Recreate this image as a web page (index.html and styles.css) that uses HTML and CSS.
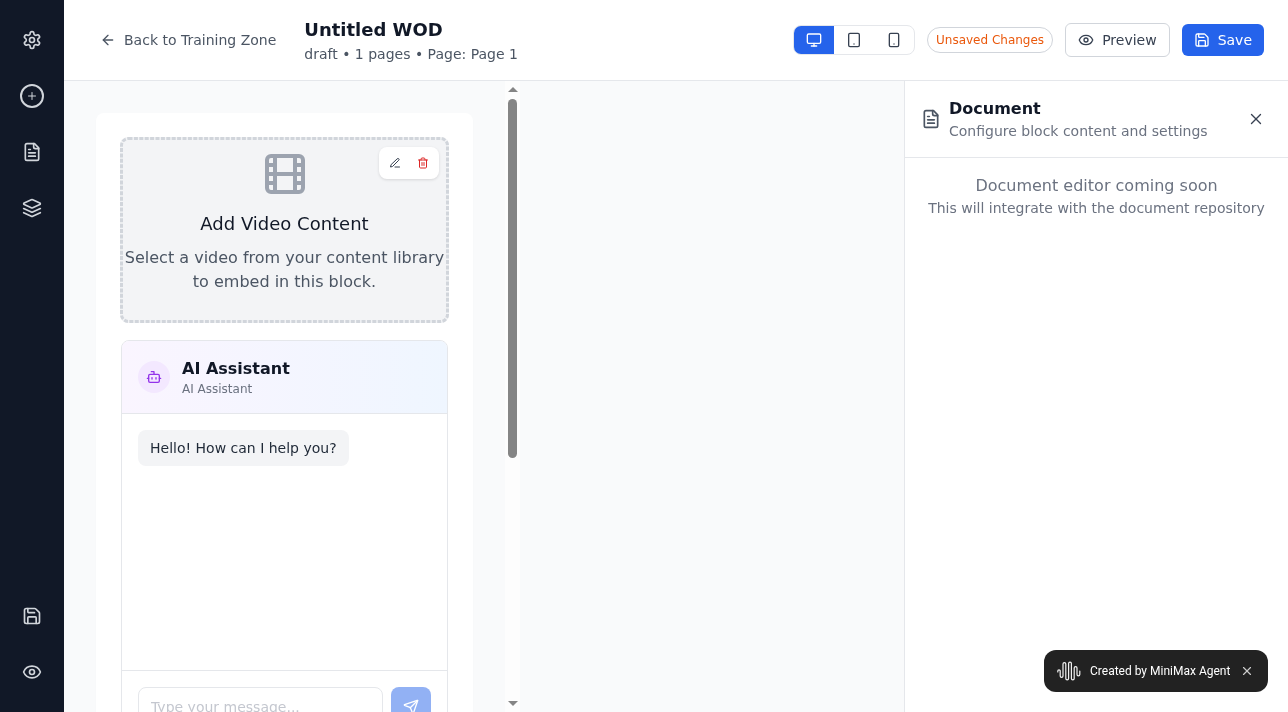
FILE: index.html
```html
<!DOCTYPE html>
<html>
	<head>
		<meta charset="utf-8" />
		<meta name="viewport" content="width=device-width, initial-scale=1">
		<title>Untitled WOD</title>
		<link rel="stylesheet" href="styles.css">
	</head>
	<body>
		<svg class="defs" width="0" height="0">
			<symbol id="i-settings" viewBox="0 0 24 24"><path d="M12.22 2h-.44a2 2 0 0 0-2 2v.18a2 2 0 0 1-1 1.73l-.43.25a2 2 0 0 1-2 0l-.15-.08a2 2 0 0 0-2.73.73l-.22.38a2 2 0 0 0 .73 2.73l.15.1a2 2 0 0 1 1 1.72v.51a2 2 0 0 1-1 1.74l-.15.09a2 2 0 0 0-.73 2.73l.22.38a2 2 0 0 0 2.73.73l.15-.08a2 2 0 0 1 2 0l.43.25a2 2 0 0 1 1 1.73V20a2 2 0 0 0 2 2h.44a2 2 0 0 0 2-2v-.18a2 2 0 0 1 1-1.73l.43-.25a2 2 0 0 1 2 0l.15.08a2 2 0 0 0 2.73-.73l.22-.39a2 2 0 0 0-.73-2.73l-.15-.08a2 2 0 0 1-1-1.74v-.5a2 2 0 0 1 1-1.74l.15-.09a2 2 0 0 0 .73-2.73l-.22-.38a2 2 0 0 0-2.73-.73l-.15.08a2 2 0 0 1-2 0l-.43-.25a2 2 0 0 1-1-1.73V4a2 2 0 0 0-2-2z"/><circle cx="12" cy="12" r="3"/></symbol>
			<symbol id="i-file" viewBox="0 0 24 24"><path d="M15 2H6a2 2 0 0 0-2 2v16a2 2 0 0 0 2 2h12a2 2 0 0 0 2-2V7Z"/><path d="M14 2v4a2 2 0 0 0 2 2h4"/><path d="M10 9H8"/><path d="M16 13H8"/><path d="M16 17H8"/></symbol>
			<symbol id="i-layers" viewBox="0 0 24 24"><path d="m12.83 2.18a2 2 0 0 0-1.66 0L2.6 6.08a1 1 0 0 0 0 1.83l8.58 3.91a2 2 0 0 0 1.66 0l8.58-3.9a1 1 0 0 0 0-1.83Z"/><path d="m22 17.65-9.17 4.16a2 2 0 0 1-1.66 0L2 17.65"/><path d="m22 12.65-9.17 4.16a2 2 0 0 1-1.66 0L2 12.65"/></symbol>
			<symbol id="i-save" viewBox="0 0 24 24"><path d="M15.2 3a2 2 0 0 1 1.4.6l3.8 3.8a2 2 0 0 1 .6 1.4V19a2 2 0 0 1-2 2H5a2 2 0 0 1-2-2V5a2 2 0 0 1 2-2z"/><path d="M17 21v-7a1 1 0 0 0-1-1H8a1 1 0 0 0-1 1v7"/><path d="M7 3v4a1 1 0 0 0 1 1h7"/></symbol>
			<symbol id="i-eye" viewBox="0 0 24 24"><path d="M2.062 12.348a1 1 0 0 1 0-.696 10.75 10.75 0 0 1 19.876 0 1 1 0 0 1 0 .696 10.75 10.75 0 0 1-19.876 0"/><circle cx="12" cy="12" r="3"/></symbol>
			<symbol id="i-x" viewBox="0 0 24 24"><path d="M18 6 6 18"/><path d="m6 6 12 12"/></symbol>
		</svg>

		<div class="app">
			<nav class="rail">
				<div class="rail-group">
					<a class="rail-btn"><svg class="ic ic-20"><use href="#i-settings"/></svg></a>
					<a class="rail-btn">
						<span class="add-ring"><svg class="ic ic-12" viewBox="0 0 24 24"><path d="M5 12h14"/><path d="M12 5v14"/></svg></span>
					</a>
					<a class="rail-btn"><svg class="ic ic-20"><use href="#i-file"/></svg></a>
					<a class="rail-btn"><svg class="ic ic-20"><use href="#i-layers"/></svg></a>
				</div>
				<div class="rail-group">
					<a class="rail-btn"><svg class="ic ic-20"><use href="#i-save"/></svg></a>
					<a class="rail-btn"><svg class="ic ic-20"><use href="#i-eye"/></svg></a>
				</div>
			</nav>

			<div class="main">
				<header class="topbar">
					<div class="topbar-left">
						<a class="back">
							<svg class="ic ic-16" viewBox="0 0 24 24"><path d="m12 19-7-7 7-7"/><path d="M19 12H5"/></svg>
							Back to Training Zone
						</a>
						<div class="page-info">
							<h1>Untitled WOD</h1>
							<p>draft • 1 pages • Page: Page 1</p>
						</div>
					</div>
					<div class="topbar-right">
						<div class="devices">
							<span class="device on"><svg class="ic ic-16" viewBox="0 0 24 24"><rect x="2" y="3" width="20" height="14" rx="2"/><path d="M8 21h8"/><path d="M12 17v4"/></svg></span>
							<span class="device"><svg class="ic ic-16" viewBox="0 0 24 24"><rect x="4" y="2" width="16" height="20" rx="2"/><path d="M12 18h.01"/></svg></span>
							<span class="device"><svg class="ic ic-16" viewBox="0 0 24 24"><rect x="5" y="2" width="14" height="20" rx="2"/><path d="M12 18h.01"/></svg></span>
						</div>
						<span class="unsaved">Unsaved Changes</span>
						<a class="btn btn-line"><svg class="ic ic-16"><use href="#i-eye"/></svg>Preview</a>
						<a class="btn btn-blue"><svg class="ic ic-16"><use href="#i-save"/></svg>Save</a>
					</div>
				</header>

				<div class="workspace">
					<div class="canvas">
						<div class="sheet">
							<section class="video-block">
								<svg class="dashes" width="329" height="186"><rect x="1.500" y="1.500" width="326" height="183" rx="7"/></svg>
								<div class="block-tools">
									<svg class="ic ic-12" viewBox="0 0 24 24"><path d="M12 20h9"/><path d="M16.5 3.5a2.12 2.12 0 0 1 3 3L7 19l-4 1 1-4Z"/></svg>
									<svg class="ic ic-12 red" viewBox="0 0 24 24"><path d="M3 6h18"/><path d="M19 6v14c0 1-1 2-2 2H7c-1 0-2-1-2-2V6"/><path d="M8 6V4c0-1 1-2 2-2h4c1 0 2 1 2 2v2"/><path d="M10 11v6"/><path d="M14 11v6"/></svg>
								</div>
								<svg class="ic film" viewBox="0 0 24 24"><rect x="3" y="3" width="18" height="18" rx="2"/><path d="M7 3v18"/><path d="M3 7.5h4"/><path d="M3 12h18"/><path d="M3 16.5h4"/><path d="M17 3v18"/><path d="M17 7.5h4"/><path d="M17 16.5h4"/></svg>
								<h3>Add Video Content</h3>
								<p>Select a video from your content library to embed in this block.</p>
							</section>

							<section class="chat">
								<div class="chat-head">
									<span class="bot"><svg class="ic ic-16" viewBox="0 0 24 24"><path d="M12 8V4H8"/><rect x="4" y="8" width="16" height="12" rx="2"/><path d="M2 14h2"/><path d="M20 14h2"/><path d="M15 13v2"/><path d="M9 13v2"/></svg></span>
									<div>
										<h4>AI Assistant</h4>
										<small>AI Assistant</small>
									</div>
								</div>
								<div class="chat-body">
									<div class="bubble">Hello! How can I help you?</div>
								</div>
								<div class="chat-foot">
									<input type="text" placeholder="Type your message..." />
									<span class="send"><svg class="ic ic-16" viewBox="0 0 24 24"><path d="M14.536 21.686a.5.5 0 0 0 .937-.024l6.5-19a.496.496 0 0 0-.635-.635l-19 6.5a.5.5 0 0 0-.024.937l7.93 3.18a2 2 0 0 1 1.112 1.11z"/><path d="m21.854 2.147-10.94 10.939"/></svg></span>
								</div>
							</section>
						</div>
					</div>

					<div class="scrollbar">
						<i class="arrow up"></i>
						<b class="thumb"></b>
						<i class="arrow down"></i>
					</div>

					<div class="spacer"></div>

					<aside class="panel">
						<div class="panel-head">
							<svg class="ic ic-20 doc"><use href="#i-file"/></svg>
							<div class="panel-title">
								<h2>Document</h2>
								<p>Configure block content and settings</p>
							</div>
							<svg class="ic close"><use href="#i-x"/></svg>
						</div>
						<div class="panel-body">
							<p class="soon">Document editor coming soon</p>
							<p class="soon-sub">This will integrate with the document repository</p>
						</div>
					</aside>
				</div>
			</div>
		</div>

		<div class="toast">
			<svg class="wave" viewBox="0 0 24 20"><path d="M.8 11V10a1.200 1.200 0 0 1 2.400 0v5a1.400 1.400 0 0 0 2.800 0V3a1.400 1.400 0 0 1 2.800 0v14.500a1.400 1.400 0 0 0 2.800 0V2.500a1.400 1.400 0 0 1 2.800 0v15a1.400 1.400 0 0 0 2.800 0V7a1.400 1.400 0 0 1 2.800 0v6.500a1.400 1.400 0 0 0 2.800 0V10"/></svg>
			<span>Created by MiniMax Agent</span>
			<svg class="ic toast-x"><use href="#i-x"/></svg>
		</div>
	</body>
</html>
```

FILE: styles.css
```css
*{
	box-sizing: border-box;
}
html,body{
	margin: 0;
	height: 100%;
	overflow: hidden;
}
body{
	font-family: "DejaVu Sans", sans-serif;
	font-size: 14px;
	color: #111827;
}
h1,h2,h3,h4,p{
	margin: 0;
}
.defs{
	position: absolute;
}
.ic{
	fill: none;
	stroke: currentColor;
	stroke-width: 2;
	stroke-linecap: round;
	stroke-linejoin: round;
	flex: none;
	display: block;
}
.ic-12{
	width: 12px;
	height: 12px;
}
.ic-16{
	width: 16px;
	height: 16px;
}
.ic-20{
	width: 20px;
	height: 20px;
}
.red{
	color: #dc2626;
}

.app{
	display: flex;
	height: 712px;
	will-change: transform;
}

/* left rail */
.rail{
	width: 64px;
	flex: none;
	background: #111827;
	color: #d1d5db;
	display: flex;
	flex-direction: column;
	justify-content: space-between;
	padding: 20px 0;
}
.rail-group{
	display: flex;
	flex-direction: column;
	gap: 16px;
}
.rail-btn{
	height: 40px;
	display: flex;
	align-items: center;
	justify-content: center;
}
.add-ring{
	width: 24px;
	height: 24px;
	border: 2px solid #d1d5db;
	border-radius: 50%;
	display: flex;
	align-items: center;
	justify-content: center;
}

.main{
	flex: 1;
	min-width: 0;
	display: flex;
	flex-direction: column;
}

/* top bar */
.topbar{
	height: 81px;
	flex: none;
	background: white;
	border-bottom: 1px solid #e5e7eb;
	padding: 0 24px;
	display: flex;
	align-items: center;
	justify-content: space-between;
}
.topbar-left{
	display: flex;
	align-items: center;
	gap: 16px;
}
.back{
	display: flex;
	align-items: center;
	gap: 8px;
	padding: 8px 12px;
	color: #4b5563;
}
.page-info h1{
	font-size: 18px;
	line-height: 28px;
	font-weight: 600;
}
.page-info p{
	line-height: 20px;
	color: #4b5563;
}
.topbar-right{
	display: flex;
	align-items: center;
	gap: 12px;
}
.devices{
	display: flex;
	border: 1px solid #e5e7eb;
	border-radius: 8px;
	overflow: hidden;
}
.device{
	width: 40px;
	height: 28px;
	display: flex;
	align-items: center;
	justify-content: center;
	color: #374151;
}
.device.on{
	background: #2563eb;
	color: white;
}
.unsaved{
	font-size: 12px;
	line-height: 16px;
	padding: 4px 8px;
	border: 1px solid #d1d5db;
	border-radius: 13px;
	color: #ea580c;
}
.btn{
	display: flex;
	align-items: center;
	gap: 8px;
	border-radius: 6px;
	line-height: 20px;
}
.btn-line{
	padding: 6px 12px;
	border: 1px solid #d1d5db;
	color: #374151;
}
.btn-blue{
	padding: 6px 12px;
	background: #2563eb;
	color: white;
}

/* canvas + side panel */
.workspace{
	flex: 1;
	min-height: 0;
	display: flex;
	background: #f9fafb;
}
.canvas{
	width: 441px;
	flex: none;
	padding: 32px 32px 0;
	overflow: hidden;
}
.sheet{
	background: white;
	border-radius: 8px;
	padding: 24px;
	box-shadow: 0 1px 2px rgba(0,0,0,.02);
}
.scrollbar{
	width: 15px;
	flex: none;
	background: #fdfdfd;
	position: relative;
}
.thumb{
	position: absolute;
	left: 3px;
	top: 18px;
	width: 9px;
	height: 359px;
	border-radius: 5px;
	background: #858585;
}
.arrow{
	position: absolute;
	left: 3px;
	border-left: 5px solid transparent;
	border-right: 5px solid transparent;
}
.arrow.up{
	top: 6px;
	border-bottom: 5px solid #858585;
}
.arrow.down{
	bottom: 6px;
	border-top: 5px solid #858585;
}
.spacer{
	flex: 1;
}

/* video block */
.video-block{
	position: relative;
	height: 186px;
	border-radius: 8px;
	background: #f3f4f6;
	padding: 13px 2px 0;
	text-align: center;
}
.dashes{
	position: absolute;
	left: 0;
	top: 0;
	fill: none;
	stroke: #d1d5db;
	stroke-width: 3;
	stroke-dasharray: 4 1.400;
}
.block-tools{
	position: absolute;
	top: 10px;
	right: 10px;
	display: flex;
	align-items: center;
	gap: 16px;
	height: 32px;
	padding: 0 10px;
	background: white;
	border-radius: 8px;
	box-shadow: 0 1px 3px rgba(0,0,0,.12);
	color: #374151;
}
.film{
	width: 48px;
	height: 48px;
	margin: 0 auto 12px;
	color: #9ca3af;
}
.video-block h3{
	font-size: 18px;
	font-weight: 400;
	line-height: 28px;
	margin-bottom: 8px;
}
.video-block p{
	font-size: 16px;
	line-height: 24px;
	color: #4b5563;
}

/* chat block */
.chat{
	margin: 17px 1px 0;
	border: 1px solid #e5e7eb;
	border-radius: 8px;
	overflow: hidden;
	background: white;
}
.chat-head{
	display: flex;
	align-items: center;
	gap: 12px;
	padding: 16px;
	background: linear-gradient(to right, #faf5ff, #eff6ff);
	border-bottom: 1px solid #e5e7eb;
}
.bot{
	width: 32px;
	height: 32px;
	border-radius: 50%;
	background: #f3e8ff;
	color: #9333ea;
	display: flex;
	align-items: center;
	justify-content: center;
}
.chat-head h4{
	font-size: 16px;
	line-height: 24px;
	font-weight: 600;
}
.chat-head small{
	display: block;
	font-size: 12px;
	line-height: 16px;
	color: #6b7280;
}
.chat-body{
	height: 256px;
	padding: 16px;
}
.bubble{
	display: inline-block;
	padding: 8px 12px;
	line-height: 20px;
	background: #f3f4f6;
	border-radius: 8px;
	color: #1f2937;
}
.chat-foot{
	display: flex;
	gap: 8px;
	padding: 16px;
	border-top: 1px solid #e5e7eb;
}
.chat-foot input{
	flex: 1;
	min-width: 0;
	height: 40px;
	padding: 0 12px;
	font: inherit;
	border: 1px solid #e5e7eb;
	border-radius: 8px;
	outline: none;
}
.chat-foot input::placeholder{
	color: #c4c7cf;
}
.send{
	width: 40px;
	height: 40px;
	border-radius: 8px;
	background: #92b1f4;
	color: white;
	display: flex;
	align-items: center;
	justify-content: center;
}

/* right panel */
.panel{
	width: 384px;
	flex: none;
	background: white;
	border-left: 1px solid #e5e7eb;
}
.panel-head{
	height: 77px;
	display: flex;
	align-items: center;
	gap: 8px;
	padding: 0 23px 0 16px;
	border-bottom: 1px solid #e5e7eb;
}
.doc{
	color: #4b5563;
}
.panel-title{
	flex: 1;
}
.panel-title h2{
	font-size: 16px;
	line-height: 24px;
	font-weight: 600;
}
.panel-title p{
	line-height: 20px;
	color: #6b7280;
}
.close{
	width: 18px;
	height: 18px;
	stroke-width: 1.800;
	color: #374151;
}
.panel-body{
	padding: 16px;
	text-align: center;
	color: #6b7280;
}
.soon{
	font-size: 16px;
	line-height: 24px;
}
.soon-sub{
	line-height: 20px;
}

/* badge over the page */
.toast{
	position: fixed;
	left: 1044px;
	top: 650px;
	width: 224px;
	height: 42px;
	display: flex;
	align-items: center;
	padding: 0 14px 0 13px;
	background: #222;
	border-radius: 12px;
	color: white;
	font-family: Roboto, sans-serif;
	font-size: 12px;
	will-change: transform;
}
.wave{
	width: 24px;
	height: 20px;
	flex: none;
	margin-right: 9px;
	fill: none;
	stroke: #f2f2f2;
	stroke-width: 1.200;
	stroke-linecap: round;
}
.toast span{
	flex: 1;
}
.toast-x{
	width: 14px;
	height: 14px;
	stroke-width: 2;
	color: #ccc;
}
```
